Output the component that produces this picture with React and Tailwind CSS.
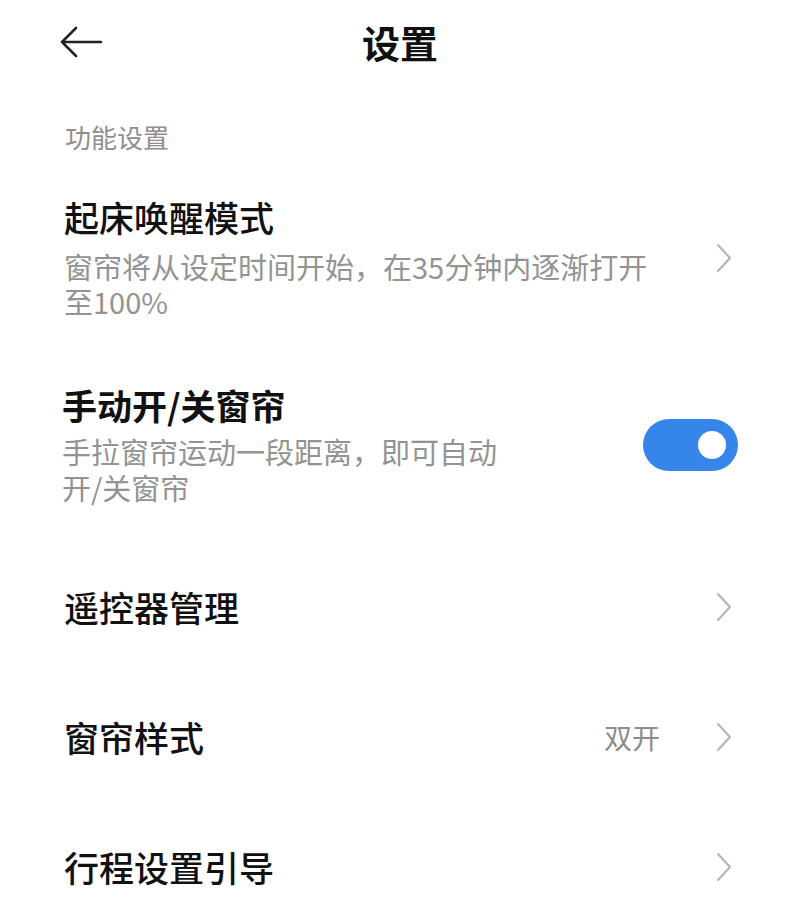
import React, { useState } from 'react';

const font = { fontFamily: '"Noto Sans CJK SC", "Noto Sans", sans-serif' };

function Chevron() {
  return (
    <svg width="16" height="30" viewBox="0 0 16 30" className="mr-[6px] shrink-0">
      <path d="M2 2 L14 15 L2 28" fill="none" stroke="#b3b3b3" strokeWidth="2" strokeLinecap="round" strokeLinejoin="round" />
    </svg>
  );
}

function Toggle({ on, onChange }) {
  return (
    <button
      onClick={() => onChange(!on)}
      className={`shrink-0 w-[95px] h-[52px] rounded-full flex items-center px-[12px] ${on ? 'bg-[#3585eb] justify-end' : 'bg-[#e5e5e5] justify-start'}`}
    >
      <span className="block w-[28px] h-[28px] rounded-full bg-white" />
    </button>
  );
}

function SimpleRow({ title, value }) {
  return (
    <div className="h-[130px] flex items-center pl-[64px] pr-[62px]">
      <div className="flex-1 text-[35px] leading-[40px] font-medium text-[#111]">{title}</div>
      {value && <div className="text-[28px] text-[#8c8c8c] mr-[56px]">{value}</div>}
      <Chevron />
    </div>
  );
}

export default function App() {
  const [manual, setManual] = useState(true);

  return (
    <div className="w-[800px] h-[920px] bg-white overflow-hidden" style={font}>
      <div className="relative h-[84px] flex items-center justify-center">
        <svg width="44" height="32" viewBox="0 0 44 32" className="absolute left-[59px] top-[26px]">
          <path d="M3 16 H42 M17 2 L3 16 L17 30" fill="none" stroke="#222" strokeWidth="2.6" strokeLinecap="round" strokeLinejoin="round" />
        </svg>
        <h1 className="text-[38px] font-bold text-[#111] leading-none">设置</h1>
      </div>

      <div className="mt-[38px] pl-[65px] text-[26px] leading-[30px] text-[#8e8e8e]">功能设置</div>

      <div className="pt-[45px] flex items-center pl-[64px] pr-[62px]">
        <div className="flex-1">
          <div className="text-[35px] leading-[40px] font-medium text-[#111]">起床唤醒模式</div>
          <div className="mt-[12px] w-[595px] text-[29px] leading-[35px] text-[#939393]">
            窗帘将从设定时间开始，在35分钟内逐渐打开至100%
          </div>
        </div>
        <Chevron />
      </div>

      <div className="pt-[66px] pb-[37px] flex items-center pl-[62px] pr-[62px]">
        <div className="flex-1">
          <div className="text-[35px] leading-[40px] font-bold text-[#111]">手动开/关窗帘</div>
          <div className="mt-[8px] w-[450px] text-[29px] leading-[36px] text-[#939393]">
            手拉窗帘运动一段距离，即可自动开/关窗帘
          </div>
        </div>
        <Toggle on={manual} onChange={setManual} />
      </div>

      <SimpleRow title="遥控器管理" />
      <SimpleRow title="窗帘样式" value="双开" />
      <SimpleRow title="行程设置引导" />
    </div>
  );
}
